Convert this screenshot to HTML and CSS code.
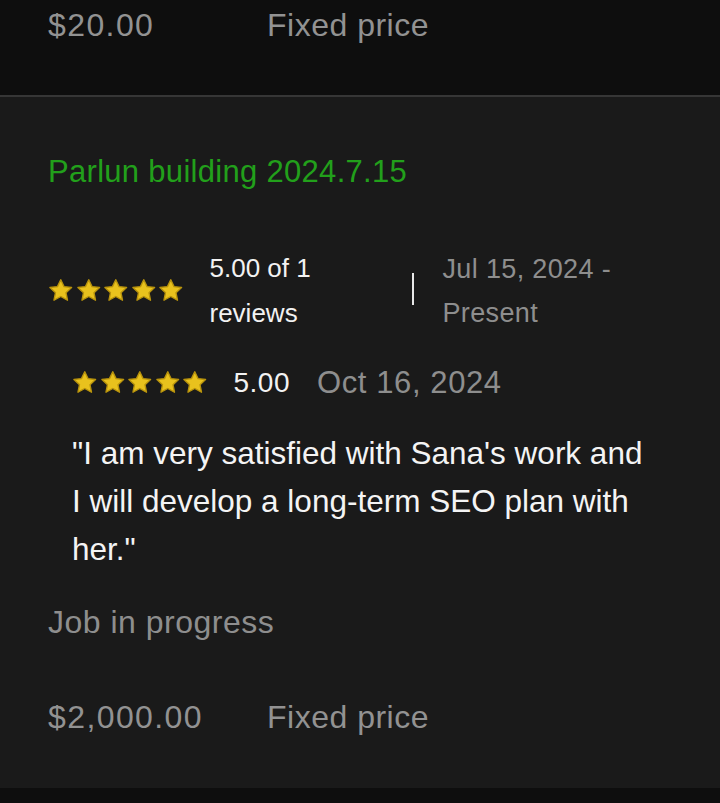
FILE: index.html
```html
<!DOCTYPE html>
<html>
<head>
<meta charset="utf-8">
<link rel="stylesheet" href="styles.css">
</head>
<body>
<svg width="0" height="0" class="defs">
  <defs>
    <symbol id="star" viewBox="0 0 24 24">
      <path d="M12 1.6l3.1 6.5 7.1.85-5.25 4.9 1.4 7.05L12 17.4l-6.35 3.5 1.4-7.05L1.8 8.95l7.1-.85z" fill="#e9c21d" stroke="#b8930c" stroke-width="1.3" stroke-linejoin="round"/>
    </symbol>
  </defs>
</svg>
<div class="top">
  <div class="price-row">
    <span class="amount">$20.00</span>
    <span class="type">Fixed price</span>
  </div>
</div>
<div class="job">
  <div class="title">Parlun building 2024.7.15</div>
  <div class="rating-row">
    <div class="stars big">
      <svg><use href="#star"/></svg><svg><use href="#star"/></svg><svg><use href="#star"/></svg><svg><use href="#star"/></svg><svg><use href="#star"/></svg>
    </div>
    <div class="score">5.00 of 1<br>reviews</div>
    <div class="sep"></div>
    <div class="dates">Jul 15, 2024 -<br>Present</div>
  </div>
  <div class="review">
    <div class="review-head">
      <div class="stars small">
        <svg><use href="#star"/></svg><svg><use href="#star"/></svg><svg><use href="#star"/></svg><svg><use href="#star"/></svg><svg><use href="#star"/></svg>
      </div>
      <span class="rscore">5.00</span>
      <span class="rdate">Oct 16, 2024</span>
    </div>
    <p class="quote">"I am very satisfied with Sana's work and I will develop a long-term SEO plan with her."</p>
  </div>
  <div class="status">Job in progress</div>
  <div class="price-row bottom">
    <span class="amount">$2,000.00</span>
    <span class="type">Fixed price</span>
  </div>
</div>
<div class="foot"></div>
</body>
</html>
```
FILE: styles.css
```css
html, body {
  margin: 0;
  padding: 0;
  background: #0e0e0e;
  font-family: "Liberation Sans", Arial, sans-serif;
}
.defs { position: absolute; }
.top {
  height: 97px;
  padding: 1px 0 0 48px;
  box-sizing: border-box;
  border-bottom: 2px solid #363636;
}
.price-row {
  display: grid;
  grid-template-columns: 219px auto;
  font-size: 32px;
  line-height: 48px;
  color: #929292;
}
.amount { letter-spacing: 1.4px; }
.type { letter-spacing: 0.5px; }
.job {
  background: #1a1a1a;
  padding: 51px 0 47px 48px;
}
.title {
  color: #22a01b;
  font-size: 31px;
  line-height: 48px;
  letter-spacing: 0.3px;
}
.rating-row {
  display: flex;
  align-items: center;
  margin-top: 50px;
  height: 90px;
}
.stars {
  display: flex;
  gap: 2px;
}
.stars svg {
  width: 25.5px;
  height: 25.5px;
  display: block;
}
.score {
  margin-left: 26px;
  color: #f2f2f2;
  font-size: 26px;
  line-height: 45px;
  width: 202px;
}
.sep {
  width: 2px;
  height: 32px;
  background: #e8e8e8;
  margin-top: -4px;
}
.dates {
  margin-left: 29px;
  color: #8e8e8e;
  font-size: 27px;
  line-height: 44px;
  letter-spacing: 0.35px;
}
.review {
  padding-left: 24px;
  margin-top: 27px;
}
.review-head {
  display: flex;
  align-items: center;
  height: 40px;
}
.rscore {
  margin-left: 26px;
  color: #f2f2f2;
  font-size: 28px;
  letter-spacing: 0.5px;
}
.rdate {
  margin-left: 27px;
  color: #8e8e8e;
  font-size: 31px;
  letter-spacing: 0.6px;
}
.quote {
  margin: 26px 0 0 0;
  width: 575px;
  color: #f4f4f4;
  font-size: 31.5px;
  line-height: 48px;
}
.status {
  margin-top: 25px;
  color: #8e8e8e;
  font-size: 32px;
  line-height: 48px;
  letter-spacing: 0.5px;
}
.price-row.bottom {
  margin-top: 47px;
}
.foot {
  height: 15px;
  background: #0e0e0e;
}
```
